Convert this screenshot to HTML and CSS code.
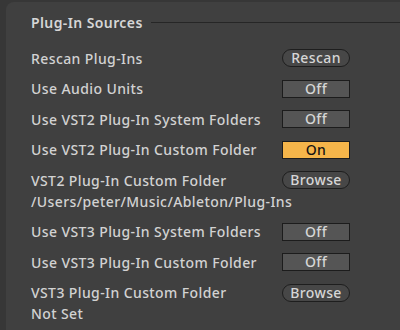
FILE: index.html
```html
<!DOCTYPE html>
<html lang="en">
<head>
  <meta charset="UTF-8" />
  <title>Plug-In Sources</title>
  <link rel="stylesheet" href="styles.css">
</head>
<body>

  <div class="panel">
    <div class="section-title">
      <span>Plug-In Sources</span>
      <div class="rule"></div>
    </div>

    <div class="row">
      <span class="label">Rescan Plug-Ins</span>
      <button class="pill-btn">Rescan</button>
    </div>
    <div class="row">
      <span class="label">Use Audio Units</span>
      <button class="toggle">Off</button>
    </div>
    <div class="row">
      <span class="label">Use VST2 Plug-In System Folders</span>
      <button class="toggle">Off</button>
    </div>
    <div class="row">
      <span class="label">Use VST2 Plug-In Custom Folder</span>
      <button class="toggle on">On</button>
    </div>
    <div class="row">
      <span class="label">VST2 Plug-In Custom Folder</span>
      <button class="pill-btn">Browse</button>
    </div>
    <div class="path">/Users/peter/Music/Ableton/Plug-Ins</div>
    <div class="row">
      <span class="label">Use VST3 Plug-In System Folders</span>
      <button class="toggle">Off</button>
    </div>
    <div class="row">
      <span class="label">Use VST3 Plug-In Custom Folder</span>
      <button class="toggle">Off</button>
    </div>
    <div class="row">
      <span class="label">VST3 Plug-In Custom Folder</span>
      <button class="pill-btn">Browse</button>
    </div>
    <div class="path">Not Set</div>
  </div>

</body>
</html>
```

FILE: styles.css
```css
body {
  margin: 0;
  height: 330px;
  overflow: hidden;
  background-color: #373737;
  font-family: 'Noto Sans', 'Inter', sans-serif;
  font-weight: 500;
  font-size: 14px;
  letter-spacing: 0.4px;
  color: #d2d2d2;
}

.panel {
  margin: 2px 0 0 6px;
  height: 340px;
  background-color: #404040;
  border-top-left-radius: 8px;
  padding-right: 50px;
}

.section-title {
  display: flex;
  align-items: center;
  height: 41px;
  padding-left: 25px;
  margin-right: -50px;
  font-weight: 600;
  color: #d6d6d6;
}

.rule {
  flex: 1;
  height: 1px;
  margin-left: 8px;
  background-color: #262626;
}

.row {
  display: flex;
  align-items: center;
  justify-content: space-between;
  height: 30.5px;
  padding-left: 25px;
}

.path {
  padding-left: 25px;
  line-height: 18px;
  margin-top: -3px;
  margin-bottom: 6px;
}

button {
  width: 68px;
  height: 18px;
  padding: 0;
  box-sizing: border-box;
  font-family: inherit;
  font-weight: 500;
  font-size: 14px;
  letter-spacing: 0.4px;
  line-height: 16px;
  color: #d6d6d6;
  cursor: pointer;
}

.pill-btn {
  background-color: #474747;
  border: 1px solid #1e1e1e;
  border-radius: 9px;
}

.toggle {
  background-color: #555555;
  border: 1px solid #1c1c1c;
  border-radius: 0;
}

.toggle.on {
  background-color: #f5b54a;
  color: #141414;
}
```
